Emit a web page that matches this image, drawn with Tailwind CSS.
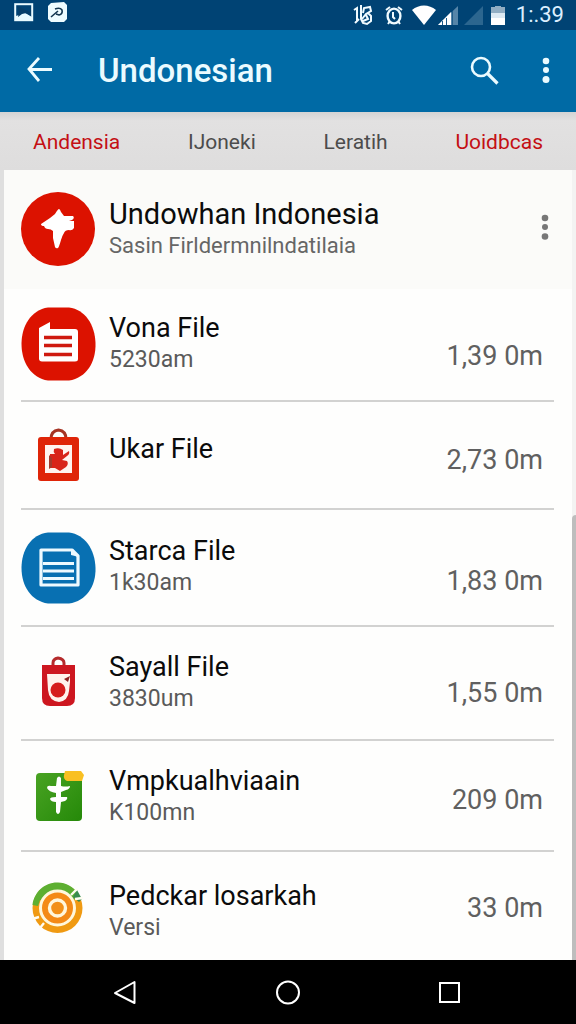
<!DOCTYPE html>
<html lang="id">
<head>
<meta charset="utf-8">
<meta name="viewport" content="width=device-width, initial-scale=1">
<title>Undonesian</title>
<script src="https://cdn.jsdelivr.net/npm/@tailwindcss/browser@4"></script>
</head>
<body class="flex min-h-screen flex-col bg-[#dfdfdf] font-['Roboto','Noto_Sans',sans-serif]">
  <div class="flex h-[30px] items-center justify-between bg-[#004374] pr-3 pl-[14px] text-white">
    <div class="flex h-full items-start gap-[14px] pt-[2px]">
      <svg class="h-5 w-5" viewBox="0 0 20 20"><rect x="1.2" y="2.2" width="17" height="16" fill="none" stroke="#e9fbff" stroke-width="2"/><path d="M2 18v-4q3-1 5-2 3-2 6 0l5 3v3z" fill="#e9fbff"/><path d="M3 4l2 5-1 6 4-3 4-1 5 3V4l-1 6" fill="#063e68"/></svg>
      <svg class="h-5 w-5" viewBox="0 0 20 20"><path d="M3 1l13-1 3 3v14l-3 3H3l-3-3V4z" fill="#eefcff"/><path d="M3 15l7-6M7 7q5-2 7 1 1 4-3 5l-3-1" fill="none" stroke="#12354f" stroke-width="1.6"/></svg>
    </div>
    <div class="flex items-center gap-[6px]">
      <svg class="h-6 w-[21px]" viewBox="0 0 21 24"><path d="M1 7l3-2v13M2 20l4-4M8 2v14l2 4 4 1 4-3V13l-3-3M10 10l1-5 6-1 1 4-5 3-4 5M13 12l2 4-5 2" fill="none" stroke="#f0fbff" stroke-width="2"/></svg>
      <svg class="mr-[2px] ml-1 h-6 w-5" viewBox="0 0 20 24"><ellipse cx="10" cy="13" rx="6.4" ry="7.4" fill="none" stroke="#f0fbff" stroke-width="2.4"/><path d="M2 7l4-3M18 7l-4-3M4 21l2-3M16 21l-2-3M9 9v5l2 2" fill="none" stroke="#f0fbff" stroke-width="2"/></svg>
      <svg class="h-6 w-6" viewBox="0 0 24 24"><path d="M0 7C7 1 17 1 24 7L12 22z" fill="#fff"/></svg>
      <svg class="-ml-1 h-6 w-5" viewBox="0 0 20 24"><path d="M0 22L20 3v19z" fill="#5685a8"/><path d="M0 22L13 9v13z" fill="#fff"/><path d="M4.500 18v4M8.500 15v7M14.500 8v14" stroke="#1e5b88" stroke-width="1"/></svg>
      <svg class="h-6 w-[19px]" viewBox="0 0 19 24"><path d="M0 22L19 3v19z" fill="#2c668f"/></svg>
      <svg class="ml-[2px] h-6 w-[14px]" viewBox="0 0 14 24"><path d="M4 3h6v1h4v8H0V4h4z" fill="#91adc3"/><path d="M0 10h14v12H0z" fill="#dce9f3"/><path d="M0 15h14v7H0z" fill="#fff"/></svg>
      <span class="ml-[5px] text-[22px] leading-6 text-[#dcefff]">1:.39</span>
    </div>
  </div>

  <header class="flex h-[82px] items-center bg-[#006aa5] pr-[18px] pl-[26px] text-[#ebfbff]">
    <button type="button" aria-label="Back" class="h-8 w-7"><svg viewBox="0 0 28 32" class="h-8 w-7"><path d="M13 3L3 14l10 12M3 14.500h23" fill="none" stroke="currentColor" stroke-width="2.800"/></svg></button>
    <h1 class="ml-[44px] flex-1 text-[33px] leading-10 font-medium">Undonesian</h1>
    <button type="button" aria-label="Search" class="h-8 w-8"><svg viewBox="0 0 32 32" class="h-8 w-8"><circle cx="11" cy="12" r="9" fill="none" stroke="currentColor" stroke-width="2.600"/><path d="M17.500 18.500l10 10" stroke="currentColor" stroke-width="3.200"/></svg></button>
    <button type="button" aria-label="More options" class="ml-8 h-8 w-6"><svg viewBox="0 0 24 32" class="h-8 w-6" fill="currentColor"><circle cx="12" cy="6" r="3.300"/><circle cx="12" cy="15" r="3"/><circle cx="12" cy="24.500" r="3.500"/></svg></button>
  </header>

  <nav class="flex h-[58px] items-center justify-between bg-linear-to-b from-[#d4d4d4] via-[#e2e1e1] via-15% to-[#dedddd] pt-[2px] px-[33px] text-[21px] leading-7 text-[#4c4c4c]">
    <a href="#" class="text-[#c40f14]">Andensia</a>
    <a href="#">IJoneki</a>
    <a href="#">Leratih</a>
    <a href="#" class="text-[#c40f14]">Uoidbcas</a>
  </nav>

  <main class="relative flex-1 px-1">
    <section class="flex min-h-[119px] items-center bg-[#fbfbf9] pr-[15px] pb-[2px] pl-[17px]">
      <svg class="h-[76px] w-[74px] shrink-0" viewBox="0 0 74 76"><circle cx="37" cy="38" r="37" fill="#dc1200"/><path d="M38 18q1 0 2 3l3 4h9q2 2-1 4l-3 1 5 0v7q-2 3-5 2-4 0-5 3-2 3-3 7-2 7-3 8-2 1-3-1l-2-9v-7q-2-2-5-2-3 0-4-3-3 0-3-2l9-6 5-4q3-5 4-5z" fill="#fff"/></svg>
      <div class="ml-[14px] flex-1 pt-[2px]">
        <h2 class="text-[29px] leading-8 text-[#0b0b0b]">Undowhan Indonesia</h2>
        <p class="text-[22px] leading-8 text-[#666]">Sasin Firldermnilndatilaia</p>
      </div>
      <button type="button" aria-label="Item options" class="h-8 w-6"><svg viewBox="0 0 24 32" class="h-8 w-6" fill="#777"><circle cx="12" cy="5" r="3.300"/><circle cx="12" cy="14" r="3"/><circle cx="12" cy="23.500" r="3.300"/></svg></button>
    </section>

    <ul class="bg-[#fefefd] pr-[18px] pl-[17px] text-[#0b0b0b]">
      <li class="flex min-h-[113px] items-center border-b-2 border-[#d2d2d1] pb-[2px]">
        <svg class="h-[74px] w-[75px] shrink-0" viewBox="0 0 75 74"><path d="M27 .5h21c16 2 26 17 26.500 36S65 71 48 73.500H27C10 71 .5 55 .5 37S10 3 27 .5z" fill="#dc1200"/><path d="M18 21l11-6v7h25q3 0 3 3v27q0 2.500-3 2.500H21q-3 0-3-3z" fill="#fff"/><path d="M23 30.500h28M23 38.500h28M23 47.500h28" stroke="#cf1a10" stroke-width="3.400"/></svg>
        <div class="ml-[13px] flex-1"><h3 class="text-[27px] leading-8">Vona File</h3><p class="text-[23px] leading-8 text-[#5a5a5a]">5230am</p></div>
        <span class="self-end pr-[11px] pb-[26px] text-[27px] leading-8 text-[#606060]">1,39 0m</span>
      </li>
      <li class="flex min-h-[108px] items-center border-b-2 border-[#d2d2d1]">
        <svg class="h-[74px] w-[75px] shrink-0" viewBox="0 0 75 74"><path d="M30 21q0-8 7.500-9 7.500 1 7.500 9" fill="none" stroke="#a63424" stroke-width="3"/><rect x="17" y="19" width="41" height="44" rx="3" fill="#df2508"/><path d="M24 27h27v28H24z" fill="#fff4ef"/><path d="M33 31q5-2 9 1l0 5 6-4q1 3-2 5l-5 4 5 1q2 3-1 6l-6 4-5-3-5 0v-9l0-5 5 0q-2-2-1-5z" fill="#d82419"/><path d="M28 37l3 3v9l-3 2z" fill="#a33a2c"/></svg>
        <div class="ml-[13px] flex-1 pb-3"><h3 class="text-[27px] leading-8">Ukar File</h3></div>
        <span class="self-end pr-[11px] pb-[32px] text-[27px] leading-8 text-[#606060]">2,73 0m</span>
      </li>
      <li class="flex min-h-[117px] items-center border-b-2 border-[#d2d2d1] pb-[2px]">
        <svg class="h-[74px] w-[75px] shrink-0" viewBox="0 0 75 74"><path d="M27 2.500h21c16 2 26 17 26.500 35.500S65 71 48 73.500H27C10 71 .5 56 .5 38S10 4.500 27 2.500z" fill="#0870b2"/><path d="M20 20h31l6 6v29H20z" fill="none" stroke="#eefaff" stroke-width="3.200" stroke-linejoin="round"/><path d="M50 19v6l8 2" fill="#eefaff"/><path d="M22 33.500h31M22 41h31M22 48.500h31" stroke="#eefaff" stroke-width="3"/></svg>
        <div class="ml-[13px] flex-1"><h3 class="text-[27px] leading-8">Starca File</h3><p class="text-[23px] leading-8 text-[#5a5a5a]">1k30am</p></div>
        <span class="self-end pr-[11px] pb-[26px] text-[27px] leading-8 text-[#606060]">1,83 0m</span>
      </li>
      <li class="flex min-h-[114px] items-center border-b-2 border-[#d2d2d1]">
        <svg class="h-[74px] w-[75px] shrink-0" viewBox="0 0 75 74"><path d="M32 21v-4q0-4 5-5 6 1 6 5v4" fill="none" stroke="#b52b2c" stroke-width="3"/><path d="M21 19h33v33q0 8-8 8H29q-8 0-8-8z" fill="#cd1720"/><path d="M26 28h23v8l-1 9q-1 10-10 11-10-1-11-12z" fill="#fff2ec"/><circle cx="37" cy="44" r="7.500" fill="#d51c1c"/><path d="M43 33l6-3-2 6z" fill="#8e2020"/></svg>
        <div class="ml-[13px] flex-1"><h3 class="text-[27px] leading-8">Sayall File</h3><p class="text-[23px] leading-8 text-[#5a5a5a]">3830um</p></div>
        <span class="self-end pr-[11px] pb-[30px] text-[27px] leading-8 text-[#606060]">1,55 0m</span>
      </li>
      <li class="flex min-h-[111px] items-center border-b-2 border-[#d2d2d1] pt-[3px]">
        <svg class="h-[74px] w-[75px] shrink-0" viewBox="0 0 75 74"><defs><linearGradient id="leaf" x2="1" y2="1"><stop stop-color="#49a323"/><stop offset="1" stop-color="#258909"/></linearGradient></defs><rect x="15" y="13" width="46" height="48" rx="4" fill="url(#leaf)"/><path d="M44 11h16l3 4-2 6H46q-4-2-3-6z" fill="#f9c022"/><path d="M36 18q2-3 4 0v8q4 1 9 0 0 3-4 4l-5 2v5h6q1 2-2 4l-4 1-1 10q-2 4-4 0l0-10q-5 0-6-3 0-2 6-2v-4q-7-1-9-5 0-3 4-2l5 0z" fill="#fff"/></svg>
        <div class="ml-[13px] flex-1"><h3 class="text-[27px] leading-8">Vmpkualhviaain</h3><p class="text-[23px] leading-8 text-[#5a5a5a]">K100mn</p></div>
        <span class="self-end pr-[11px] pb-[34px] text-[27px] leading-8 text-[#606060]">209 0m</span>
      </li>
      <li class="flex min-h-[108px] items-center pt-3">
        <svg class="h-[74px] w-[75px] shrink-0" viewBox="0 0 75 74"><circle cx="36.500" cy="33" r="25" fill="#f09a12"/><path d="M11.500 30C13 17 24 7 37 7.500c8 0 15 4 20 11L53 25H19l-2 6z" fill="#5daf31"/><path d="M52 22l4-7 5 9-3 3z" fill="#388c50"/><path d="M50 20l6-6M54 24l8-1M11 44l7-2M19 53l4-5" stroke="#fffdf2" stroke-width="2.400"/><circle cx="36.500" cy="33" r="17" fill="#f48a16" stroke="#fff7dc" stroke-width="3"/><circle cx="36.500" cy="33" r="8" fill="#f29018" stroke="#fff7dc" stroke-width="3.400"/></svg>
        <div class="ml-[13px] flex-1"><h3 class="text-[27px] leading-8">Pedckar losarkah</h3><p class="text-[23px] leading-8 text-[#5a5a5a]">Versi</p></div>
        <span class="self-end pr-[11px] pb-[36px] text-[27px] leading-8 text-[#606060]">33 0m</span>
      </li>
    </ul>
    <div class="absolute inset-y-0 right-0 w-1 bg-[#f3f3f2]"><div class="absolute top-[345px] bottom-0 w-full rounded-tl bg-[#bdbdbd]"></div></div>
  </main>

  <footer class="flex h-16 items-center justify-between bg-black pr-[113px] pl-[112px]">
    <button type="button" aria-label="Back" class="h-7 w-7"><svg viewBox="0 0 28 28" class="h-7 w-7"><path d="M3 15L22.500 4v21z" fill="none" stroke="#fff" stroke-width="2" stroke-linejoin="round"/></svg></button>
    <button type="button" aria-label="Home" class="h-7 w-7"><svg viewBox="0 0 28 28" class="h-7 w-7"><circle cx="14" cy="14.500" r="11" fill="none" stroke="#fff" stroke-width="2"/></svg></button>
    <button type="button" aria-label="Recent apps" class="h-7 w-7"><svg viewBox="0 0 28 28" class="h-7 w-7"><rect x="5" y="5" width="19" height="19" fill="none" stroke="#fff" stroke-width="2"/></svg></button>
  </footer>
</body>
</html>
